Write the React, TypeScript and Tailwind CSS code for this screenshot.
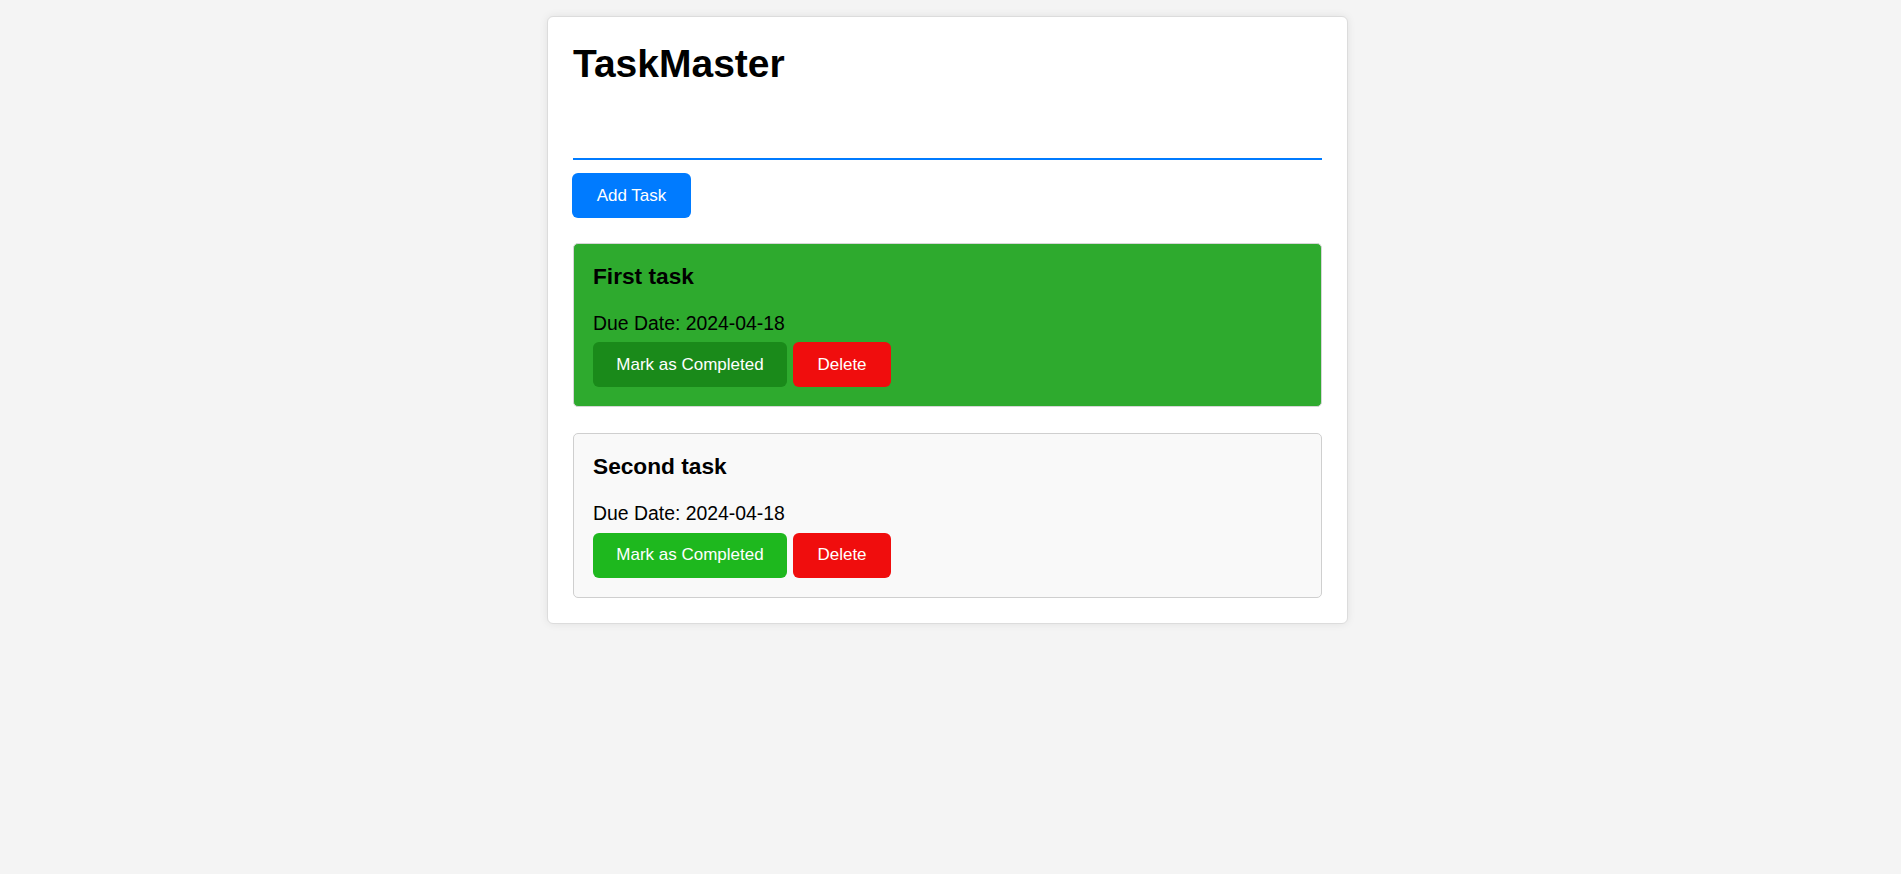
import React, { useState } from "react";

type Task = {
    id: number;
    title: string;
    dueDate: string;
    completed: boolean;
};

const font = { fontFamily: '"Liberation Sans", Arial, sans-serif' };

const btnCls = "h-[45px] rounded-[6px] text-[17px] text-white cursor-pointer";

const App: React.FC = () => {
    const [text, setText] = useState("");
    const [tasks, setTasks] = useState<Task[]>([
        { id: 1, title: "First task", dueDate: "2024-04-18", completed: true },
        { id: 2, title: "Second task", dueDate: "2024-04-18", completed: false },
    ]);

    const addTask = () => {
        if (!text.trim()) return;
        setTasks(prev => [...prev, { id: Date.now(), title: text, dueDate: "2024-04-18", completed: false }]);
        setText("");
    };

    const toggle = (id: number) =>
        setTasks(prev => prev.map(t => (t.id === id ? { ...t, completed: !t.completed } : t)));

    const remove = (id: number) => setTasks(prev => prev.filter(t => t.id !== id));

    return (
        <div className="min-h-screen bg-[#f4f4f4] pt-[16px] pr-[6px]" style={font}>
            <div className="mx-auto w-[801px] rounded-[6px] border border-[#dcdcdc] bg-white p-[25px] shadow-[0_0_8px_rgba(0,0,0,0.08)]">
                <h1 className="text-[39px] font-bold leading-[1.15] text-black">TaskMaster</h1>

                <input
                    value={text}
                    onChange={e => setText(e.target.value)}
                    className="mt-[26px] block h-[47px] w-full border-b-2 border-[#007bff] bg-transparent px-2 text-[19px] outline-none"
                />

                <button
                    onClick={addTask}
                    className={`${btnCls} mt-[13px] -ml-px block w-[119px] bg-[#007bff]`}
                >
                    Add Task
                </button>

                <div className="mt-[25px] flex flex-col gap-[26px]">
                    {tasks.map(task => (
                        <div
                            key={task.id}
                            className={`rounded-[5px] border p-[19px] ${
                                task.completed ? "border-[#d6d6d6] bg-[#2eaa2e]" : "border-[#cfcfcf] bg-[#f9f9f9]"
                            }`}
                        >
                            <h3 className="text-[22.7px] font-bold leading-[1.15] text-black">{task.title}</h3>
                            <p className="mt-[23px] text-[19.4px] leading-[1.15] text-black">Due Date: {task.dueDate}</p>
                            <div className="mt-[8px] flex gap-[6px]">
                                <button
                                    onClick={() => toggle(task.id)}
                                    className={`${btnCls} w-[194px] ${task.completed ? "bg-[#1a8a1a]" : "bg-[#1eb81e]"}`}
                                >
                                    Mark as Completed
                                </button>
                                <button
                                    onClick={() => remove(task.id)}
                                    className={`${btnCls} w-[98px] bg-[#f00d0d]`}
                                >
                                    Delete
                                </button>
                            </div>
                        </div>
                    ))}
                </div>
            </div>
        </div>
    );
};

export default App;
